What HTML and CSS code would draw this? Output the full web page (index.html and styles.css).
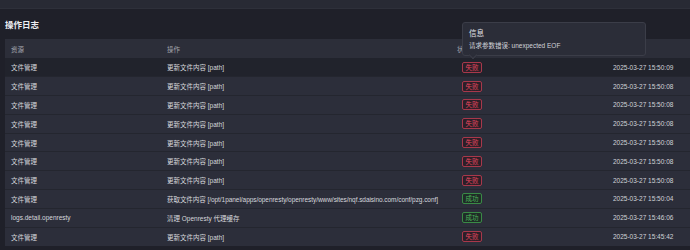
FILE: index.html
```html
<!DOCTYPE html>
<html lang="zh-CN">
<head>
    <meta charset="UTF-8">
    <title>操作日志</title>
    <link rel="stylesheet" href="styles.css">
</head>
<body>
    <div class="topbar"></div>

    <div class="page">
        <div class="page-title">操作日志</div>

        <table class="log-table">
            <colgroup>
                <col class="col-source">
                <col class="col-action">
                <col class="col-status">
                <col class="col-time">
            </colgroup>
            <thead>
                <tr>
                    <th>资源</th>
                    <th>操作</th>
                    <th>状态</th>
                    <th>日期</th>
                </tr>
            </thead>
            <tbody>
                <tr class="hovered">
                    <td>文件管理</td>
                    <td>更新文件内容 [path]</td>
                    <td><span class="tag fail">失败</span></td>
                    <td class="time">2025-03-27 15:50:09</td>
                </tr>
                <tr>
                    <td>文件管理</td>
                    <td>更新文件内容 [path]</td>
                    <td><span class="tag fail">失败</span></td>
                    <td class="time">2025-03-27 15:50:08</td>
                </tr>
                <tr>
                    <td>文件管理</td>
                    <td>更新文件内容 [path]</td>
                    <td><span class="tag fail">失败</span></td>
                    <td class="time">2025-03-27 15:50:08</td>
                </tr>
                <tr>
                    <td>文件管理</td>
                    <td>更新文件内容 [path]</td>
                    <td><span class="tag fail">失败</span></td>
                    <td class="time">2025-03-27 15:50:08</td>
                </tr>
                <tr>
                    <td>文件管理</td>
                    <td>更新文件内容 [path]</td>
                    <td><span class="tag fail">失败</span></td>
                    <td class="time">2025-03-27 15:50:08</td>
                </tr>
                <tr>
                    <td>文件管理</td>
                    <td>更新文件内容 [path]</td>
                    <td><span class="tag fail">失败</span></td>
                    <td class="time">2025-03-27 15:50:08</td>
                </tr>
                <tr>
                    <td>文件管理</td>
                    <td>更新文件内容 [path]</td>
                    <td><span class="tag fail">失败</span></td>
                    <td class="time">2025-03-27 15:50:08</td>
                </tr>
                <tr>
                    <td>文件管理</td>
                    <td class="path">获取文件内容 [/opt/1panel/apps/openresty/openresty/www/sites/nqf.sdaisino.com/conf/pzg.conf]</td>
                    <td><span class="tag ok">成功</span></td>
                    <td class="time">2025-03-27 15:50:04</td>
                </tr>
                <tr>
                    <td>logs.detail.openresty</td>
                    <td>清理 Openresty 代理缓存</td>
                    <td><span class="tag ok">成功</span></td>
                    <td class="time">2025-03-27 15:46:06</td>
                </tr>
                <tr>
                    <td>文件管理</td>
                    <td>更新文件内容 [path]</td>
                    <td><span class="tag fail">失败</span></td>
                    <td class="time">2025-03-27 15:45:42</td>
                </tr>
            </tbody>
        </table>

        <!-- popover shown over the hovered status tag -->
        <div class="popover">
            <div class="popover-title">信息</div>
            <div class="popover-body">请求参数错误: unexpected EOF</div>
        </div>
    </div>
</body>
</html>
```

FILE: styles.css
```css
* {
    margin: 0;
    padding: 0;
    box-sizing: border-box;
}

body {
    width: 690px;
    height: 250px;
    overflow: hidden;
    background-color: #1f2029;
    font-family: "Liberation Sans", "Noto Sans CJK SC", sans-serif;
    color: #d6d7dc;
}

.topbar {
    height: 9px;
    background-color: #282a34;
    border-bottom: 1px solid #2e303a;
}

.page {
    position: relative;
    padding-left: 5px;
}

.page-title {
    height: 30px;
    padding-top: 11px;
    font-size: 8.5px;
    font-weight: bold;
    color: #eceef2;
    line-height: 10px;
}

.log-table {
    width: 695px;
    border-collapse: collapse;
    table-layout: fixed;
    font-size: 6.5px;
}

.col-source { width: 156px; }
.col-action { width: 290px; }
.col-status { width: 156px; }
.col-time { width: 93px; }

.log-table th {
    height: 19px;
    padding: 0 6px;
    text-align: left;
    font-weight: normal;
    color: #a3a5ad;
    background-color: #2c2e39;
}

.log-table td {
    height: 18.8px;
    padding: 0 6px;
    background-color: #2c2e3a;
    border-top: 1px solid #24262f;
    white-space: nowrap;
}

.log-table tr.hovered td {
    background-color: #21232c;
    border-top: none;
}

.log-table td.path {
    letter-spacing: -0.05px;
}

.log-table td.time {
    color: #d0d2d8;
}

.tag {
    display: inline-block;
    margin-left: 5px;
    padding: 0 2.5px;
    height: 11px;
    line-height: 9px;
    border: 1px solid;
    border-radius: 2px;
    font-size: 6.5px;
}

.tag.fail {
    color: #e4465e;
    border-color: #a8384b;
    background-color: #2c1f28;
}

.tag.ok {
    color: #4cb35a;
    border-color: #3a8a46;
    background-color: #1f2c27;
}

.popover {
    position: absolute;
    left: 462px;
    top: 13px;
    width: 184px;
    height: 34px;
    padding: 5px 6px;
    background-color: #2b2d38;
    border: 1px solid #3b3d48;
    border-radius: 3px;
}

.popover::after {
    content: "";
    position: absolute;
    left: 7px;
    bottom: -3px;
    width: 5px;
    height: 5px;
    background-color: #2b2d38;
    border-right: 1px solid #3b3d48;
    border-bottom: 1px solid #3b3d48;
    transform: rotate(45deg);
}

.popover-title {
    font-size: 7.5px;
    line-height: 10px;
    color: #e0e1e6;
    margin-top: 1px;
    margin-bottom: 2px;
}

.popover-body {
    font-size: 6.5px;
    line-height: 9px;
    color: #d2d4da;
}
```
